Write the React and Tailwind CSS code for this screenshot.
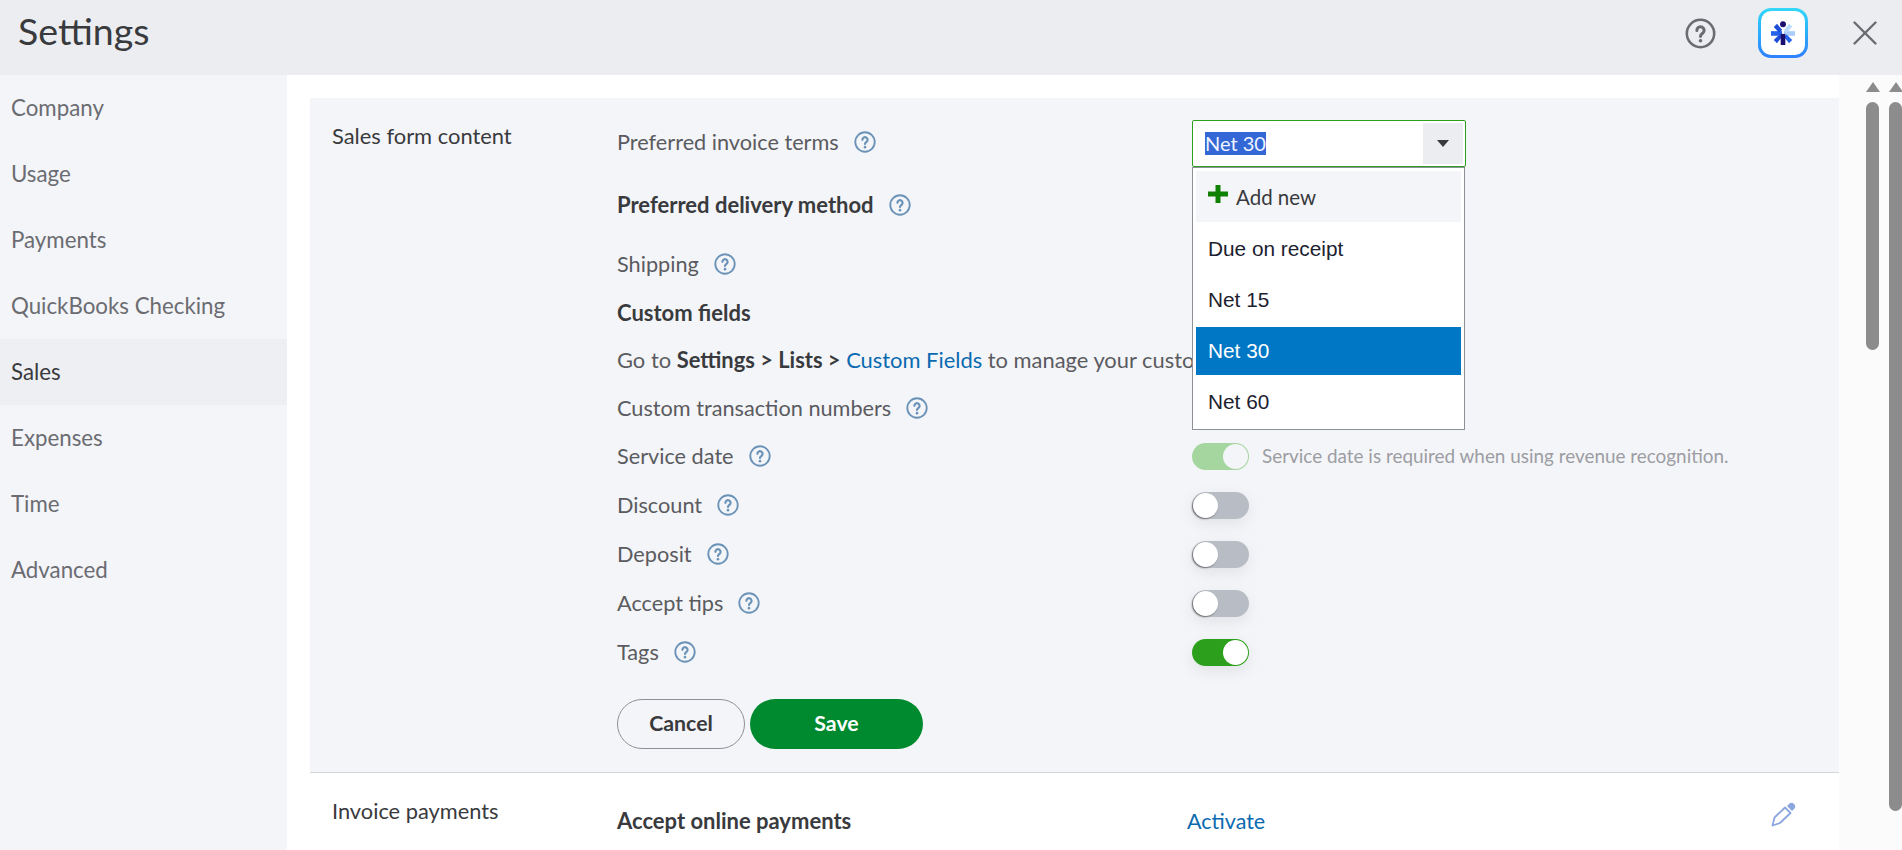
import { X } from 'lucide-react';

const font = { fontFamily: 'Lato, "Noto Sans", sans-serif' };

const sideItems = ['Company', 'Usage', 'Payments', 'QuickBooks Checking', 'Sales', 'Expenses', 'Time', 'Advanced'];

function HelpIcon({ className = 'size-[22px] text-[#6b93b8]', strokeWidth = 2 }) {
    return (
        <svg viewBox="0 0 24 24" className={`shrink-0 ${className}`} fill="none" stroke="currentColor">
            <circle cx="12" cy="12" r="10.6" strokeWidth={strokeWidth} />
            <path d="M9.2 9.6a2.8 2.8 0 1 1 4.5 2.2c-1.1.8-1.7 1.2-1.7 2.4" strokeWidth="2.4" strokeLinecap="round" />
            <circle cx="12" cy="17.6" r="1.4" fill="currentColor" stroke="none" />
        </svg>
    );
}

function Logo() {
    return (
        <div className="size-[50px] rounded-[13px] bg-gradient-to-b from-[#35d8f8] to-[#2f7fff] p-[3px]">
            <div className="flex size-full items-center justify-center rounded-[10px] bg-white">
                <svg viewBox="0 0 26 26" className="size-[24px]">
                    <rect x="0" y="11" width="12" height="5" fill="#2563eb" />
                    <rect x="14" y="11" width="12" height="5" fill="#a9cdfd" />
                    <path d="M3 4.5 6.5 1 12 7.5 9 11Z" fill="#1d4ed8" transform="translate(0 2)" />
                    <path d="M23 4 19.5 1 14 8l3 3Z" fill="#bcd9ff" transform="translate(0 2)" />
                    <path d="M3 20.5 6.5 24 12 17l-3-2.5Z" fill="#1d4ed8" />
                    <path d="M23 20.5 19.5 24 14 17l3-2.5Z" fill="#2563eb" />
                    <rect x="10.5" y="14" width="5" height="12" fill="#1a0f6e" />
                    <circle cx="13" cy="3.5" r="3.2" fill="#1a0f6e" />
                </svg>
            </div>
        </div>
    );
}

function EditIcon() {
    return (
        <svg viewBox="0 0 25 25" className="size-[25px] text-[#8ba6de]" fill="none" stroke="currentColor">
            <path d="M1.5 23.5 3.5 15.5 14 5.5 19.5 11 9 21Z" strokeWidth="1.8" strokeLinejoin="round" />
            <path d="M16 4 18.5 1.6a3.6 3.6 0 0 1 5 5L21 9Z" fill="currentColor" stroke="none" />
        </svg>
    );
}

function Toggle({ on, disabled }) {
    const track = disabled ? 'bg-[#a6d6a0]' : on ? 'bg-[#2ca01c]' : 'bg-[#b8bcc4]';
    const knob = disabled ? 'bg-[#f4f5f8]' : 'bg-white';

    return (
        <div className={`flex h-[27px] w-[57px] items-center rounded-full px-[1px] ${track} ${on ? 'justify-end' : 'justify-start'} ${disabled ? '' : 'shadow-[0_5px_16px_rgba(0,0,0,0.08)]'}`}>
            <div className={`size-[25px] rounded-full ${knob} ${on ? '' : 'shadow-[-1px_1px_2px_rgba(0,0,0,0.45)]'}`} />
        </div>
    );
}

function LabelRow({ label, height = 'h-[49px]', children }) {
    return (
        <div className={`flex items-center ${height}`}>
            <div className="flex w-[575px] shrink-0 items-center gap-[15px] text-[21.7px] text-[#5a5b60]">
                <span>{label}</span>
                <HelpIcon />
            </div>
            {children}
        </div>
    );
}

function TermsSelect() {
    const options = ['Due on receipt', 'Net 15', 'Net 30', 'Net 60'];

    return (
        <div className="relative h-[47px] w-[274px]">
            <div className="flex h-full items-center justify-between rounded-[2px] border border-[#2ca01c] bg-white pr-[2px] pl-[12px]">
                <span className="bg-[#3367d6] text-[20px] leading-[23px] text-[#eef3ff]">Net 30</span>
                <span className="flex h-[41px] w-[40px] items-center justify-center bg-[#ecedf1]">
                    <span className="size-0 border-x-[6px] border-t-[7px] border-x-transparent border-t-[#393a3d]" />
                </span>
            </div>
            <div className="absolute top-[47px] left-0 z-10 w-[273px] border border-[#8d9096] bg-white p-[3px]">
                <div className="flex h-[51px] items-center gap-[8px] bg-[#f4f5f8] pl-[12px] text-[20.5px] text-[#393a3d]">
                    <svg viewBox="0 0 20 18" className="mb-[5px] h-[18px] w-[20px]">
                        <path d="M7.5 0h5v6.5H20v5h-7.5V18h-5v-6.5H0v-5h7.5Z" fill="#108000" />
                    </svg>
                    <span className="pt-[2px]">Add new</span>
                </div>
                {options.map((option) => (
                    <div key={option} className="flex h-[51px] items-end">
                        <div
                            className={`flex h-[48px] w-full items-center pl-[12px] text-[20.8px] ${
                                option === 'Net 30' ? 'bg-[#0077c5] text-white' : 'text-[#1c2130]'
                            }`}
                            style={{ fontFamily: '"Liberation Sans", sans-serif' }}
                        >
                            {option}
                        </div>
                    </div>
                ))}
            </div>
        </div>
    );
}

export default function App() {
    return (
        <div className="flex h-[850px] flex-col overflow-hidden bg-white" style={font}>
            <header className="flex h-[75px] shrink-0 items-center bg-[#ecedf1] pr-[16px] pl-[18px]">
                <h1 className="flex-1 pb-[13px] text-[37.5px] text-[#393a3d]">Settings</h1>
                <div className="flex items-center pb-[9px]">
                    <HelpIcon className="size-[31px] text-[#6b6c72]" strokeWidth={2} />
                    <div className="mr-[36px] ml-[42px]">
                        <Logo />
                    </div>
                    <X className="size-[42px] text-[#6b6c72]" strokeWidth={1.4} />
                </div>
            </header>

            <div className="flex min-h-0 flex-1">
                <nav className="w-[287px] shrink-0 bg-[#f4f5f8]">
                    {sideItems.map((item) => (
                        <div
                            key={item}
                            className={`flex h-[66px] items-center pl-[11px] text-[22.3px] ${
                                item === 'Sales' ? 'bg-[#eeeff3] text-[#393a3d]' : 'text-[#6b6c72]'
                            }`}
                        >
                            {item}
                        </div>
                    ))}
                </nav>

                <main className="min-w-0 flex-1 pt-[23px] pl-[23px]">
                    <section className="flex h-[675px] border-b border-[#d4d7dc] bg-[#f4f5f8] pt-[22px] pl-[22px]">
                        <h2 className="w-[285px] shrink-0 pt-[4px] text-[21.9px] leading-[24px] text-[#393a3d]">Sales form content</h2>
                        <div>
                            <LabelRow label="Preferred invoice terms" height="h-[47px] pb-[2px]">
                                <div className="-mb-[2px]">
                                    <TermsSelect />
                                </div>
                            </LabelRow>
                            <div className="flex h-[73px] items-center gap-[15px] pt-[2px] text-[22px] font-bold text-[#393a3d]">
                                <span>Preferred delivery method</span>
                                <HelpIcon />
                            </div>
                            <LabelRow label="Shipping" height="h-[48px]" />
                            <div className="flex h-[48px] items-center text-[22px] font-bold text-[#393a3d]">Custom fields</div>
                            <div className="flex h-[48px] items-center whitespace-nowrap text-[21.9px] text-[#5a5b60]">
                                <span>
                                    Go to <b className="font-bold text-[#393a3d]">Settings &gt; Lists &gt;</b>{' '}
                                    <span className="text-[#0a6ab0]">Custom Fields</span> to manage your custom fields
                                </span>
                            </div>
                            <LabelRow label="Custom transaction numbers" height="h-[48px]" />
                            <LabelRow label="Service date">
                                <Toggle on disabled />
                                <span className="ml-[13px] text-[18.9px] text-[#9c9da3]">Service date is required when using revenue recognition.</span>
                            </LabelRow>
                            <LabelRow label="Discount">
                                <Toggle />
                            </LabelRow>
                            <LabelRow label="Deposit">
                                <Toggle />
                            </LabelRow>
                            <LabelRow label="Accept tips">
                                <Toggle />
                            </LabelRow>
                            <LabelRow label="Tags">
                                <Toggle on />
                            </LabelRow>
                            <div className="mt-[22px] flex gap-[5px]">
                                <button type="button" className="h-[50px] w-[128px] rounded-full border border-[#8d9096] text-[21.3px] font-bold text-[#393a3d]">
                                    Cancel
                                </button>
                                <button type="button" className="h-[50px] w-[173px] rounded-full bg-[#008a2f] text-[21.3px] font-bold text-white">
                                    Save
                                </button>
                            </div>
                        </div>
                    </section>

                    <section className="flex pl-[22px]">
                        <h2 className="w-[285px] shrink-0 pt-[25px] text-[21.8px] leading-[26px] text-[#393a3d]">Invoice payments</h2>
                        <div className="flex flex-1 pt-[35px]">
                            <span className="w-[570px] text-[22px] leading-[26px] font-bold text-[#393a3d]">Accept online payments</span>
                            <span className="w-[584px] text-[21.5px] leading-[26px] text-[#0a6ab0]">Activate</span>
                            <div className="-mt-[6px]">
                                <EditIcon />
                            </div>
                        </div>
                    </section>
                </main>

                <div className="flex w-[63px] shrink-0 justify-end gap-[10px] bg-[#fbfbfb] pt-[7px] pl-[4px]">
                    <div className="flex w-[13px] flex-col items-center gap-[10px]">
                        <span className="size-0 border-x-[7px] border-b-[10px] border-x-transparent border-b-[#8c8c8c]" />
                        <span className="h-[248px] w-[13px] rounded-full bg-[#8c8c8c]" />
                    </div>
                    <div className="flex w-[13px] flex-col items-center gap-[10px]">
                        <span className="size-0 border-x-[7px] border-b-[10px] border-x-transparent border-b-[#8c8c8c]" />
                        <span className="h-[709px] w-[13px] rounded-full bg-[#8c8c8c]" />
                    </div>
                </div>
            </div>
        </div>
    );
}
